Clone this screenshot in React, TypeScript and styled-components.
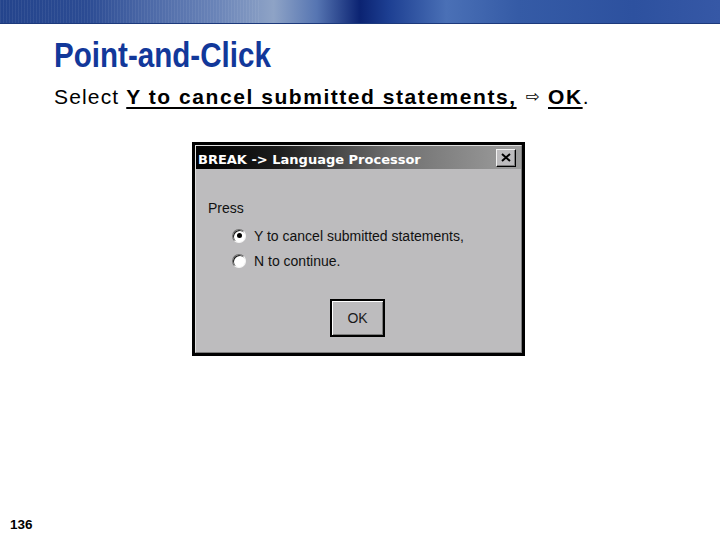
import React from "react";
import styled, { createGlobalStyle } from "styled-components";

const GlobalStyle = createGlobalStyle`
  html, body {
    margin: 0;
    padding: 0;
    background: #ffffff;
  }
  body {
    font-family: "Liberation Sans", Arial, sans-serif;
  }
`;

const Slide = styled.div`
  width: 720px;
  height: 540px;
  display: flex;
  flex-direction: column;
  background: #ffffff;
  overflow: hidden;
`;

const Banner = styled.div`
  height: 24px;
  flex-shrink: 0;
  background:
    repeating-linear-gradient(90deg, rgba(255, 255, 255, 0.06) 0 1px, transparent 1px 3px) 0 0 / 260px 100% no-repeat,
    linear-gradient(
      90deg,
      #24448c 0%,
      #2b4b93 12%,
      #4a67a6 20%,
      #6a84b8 30%,
      #8ea3c6 38%,
      #5675b2 44%,
      #0b2372 50%,
      #1d3f92 54%,
      #4a70b6 62%,
      #355ba6 72%,
      #2d519f 88%,
      #3658a6 100%
    );
  border-bottom: 1px solid #1d3a7c;
  box-sizing: border-box;
`;

const Content = styled.div`
  padding-left: 54px;
  display: flex;
  flex-direction: column;
  align-items: flex-start;
`;

const Title = styled.h1`
  margin: 11px 0 0;
  font-family: "Liberation Sans", Arial, sans-serif;
  font-weight: bold;
  font-size: 35px;
  line-height: 40px;
  color: #12389a;
  transform: scaleX(0.845);
  transform-origin: left center;
`;

const Lead = styled.p`
  margin: 10px 0 0;
  font-size: 21px;
  line-height: 24px;
  color: #000;
  letter-spacing: 1.15px;
  white-space: nowrap;
`;

const Key = styled.span`
  font-weight: bold;
  text-decoration: underline;
  text-decoration-thickness: 2px;
  text-underline-offset: 3px;
  letter-spacing: 1.55px;
`;

const Arrow = styled.span`
  font-family: "DejaVu Sans", sans-serif;
  font-size: 17px;
  margin: 0 7px 0 9px;
  position: relative;
  top: -2px;
`;

const DialogArea = styled.div`
  margin: 32px 0 0 192px;
`;

const Dialog = styled.div`
  width: 333px;
  box-sizing: border-box;
  border: 3px solid #000;
  background: #bdbcbe;
`;

const DialogInner = styled.div`
  border-top: 1px solid #dedede;
  border-left: 1px solid #dedede;
  border-right: 1px solid #7c7c7c;
  border-bottom: 1px solid #7c7c7c;
`;

const TitleBar = styled.div`
  height: 23px;
  display: flex;
  align-items: center;
  justify-content: space-between;
  padding: 0 5px 0 2px;
  background: linear-gradient(90deg, #000000 0%, #1c1c1c 25%, #6e6e6e 60%, #9e9e9e 100%);
`;

const TitleText = styled.span`
  font-family: "DejaVu Sans", Verdana, sans-serif;
  font-weight: bold;
  font-size: 13px;
  color: #ffffff;
  padding-top: 3px;
`;

const CloseButton = styled.div`
  width: 20px;
  height: 18px;
  box-sizing: border-box;
  display: flex;
  align-items: center;
  justify-content: center;
  background: #bdbcbe;
  border-top: 1px solid #f2f2f2;
  border-left: 1px solid #f2f2f2;
  border-right: 1px solid #000;
  border-bottom: 1px solid #000;
  box-shadow: inset -1px -1px 0 #7c7c7c;
`;

const Body = styled.div`
  padding: 31px 0 15px 12px;
  font-family: "Liberation Sans", Arial, sans-serif;
  font-size: 14px;
  color: #111;
`;

const Label = styled.div`
  line-height: 16px;
  height: 16px;
`;

const Options = styled.div`
  margin-top: 7px;
  padding-left: 24px;
  display: flex;
  flex-direction: column;
`;

const Option = styled.div`
  height: 25px;
  display: flex;
  align-items: center;
  gap: 8px;
`;

const Radio = styled.span<{ $checked?: boolean }>`
  width: 14px;
  height: 14px;
  box-sizing: border-box;
  border-radius: 50%;
  background: #ffffff;
  border: 1px solid;
  border-color: #6e6e6e #f4f4f4 #f4f4f4 #6e6e6e;
  box-shadow: inset 1px 1px 0 #1a1a1a;
  display: flex;
  align-items: center;
  justify-content: center;

  &::after {
    content: "";
    width: 5px;
    height: 5px;
    border-radius: 50%;
    background: ${(p) => (p.$checked ? "#000" : "transparent")};
  }
`;

const ButtonRow = styled.div`
  margin-top: 26px;
  display: flex;
  justify-content: center;
  padding-right: 14px;
`;

const OkButton = styled.div`
  width: 55px;
  height: 38px;
  box-sizing: border-box;
  border: 2px solid #000;
  background: #bdbcbe;
  box-shadow: inset 1px 1px 0 #ffffff, inset -1px -1px 0 #7c7c7c;
  display: flex;
  align-items: center;
  justify-content: center;
  font-size: 14px;
  color: #1a1a1a;
`;

const Footer = styled.div`
  margin-top: auto;
  padding: 0 0 8px 10px;
  font-size: 13.5px;
  line-height: 15px;
  font-weight: bold;
  color: #000;
`;

const CloseIcon = () => (
  <svg width="10" height="9" viewBox="0 0 10 9">
    <path d="M1 1 L9 8 M9 1 L1 8" stroke="#000" strokeWidth="2" />
  </svg>
);

export default function App() {
  return (
    <>
      <GlobalStyle />
      <Slide>
        <Banner />
        <Content>
          <Title>Point-and-Click</Title>
          <Lead>
            Select <Key>Y to cancel submitted statements,</Key>
            <Arrow>⇨</Arrow>
            <Key>OK</Key>.
          </Lead>
        </Content>
        <DialogArea>
          <Dialog>
            <DialogInner>
              <TitleBar>
                <TitleText>BREAK -&gt; Language Processor</TitleText>
                <CloseButton>
                  <CloseIcon />
                </CloseButton>
              </TitleBar>
              <Body>
                <Label>Press</Label>
                <Options>
                  <Option>
                    <Radio $checked />
                    <span>Y to cancel submitted statements,</span>
                  </Option>
                  <Option>
                    <Radio />
                    <span>N to continue.</span>
                  </Option>
                </Options>
                <ButtonRow>
                  <OkButton>OK</OkButton>
                </ButtonRow>
              </Body>
            </DialogInner>
          </Dialog>
        </DialogArea>
        <Footer>136</Footer>
      </Slide>
    </>
  );
}
